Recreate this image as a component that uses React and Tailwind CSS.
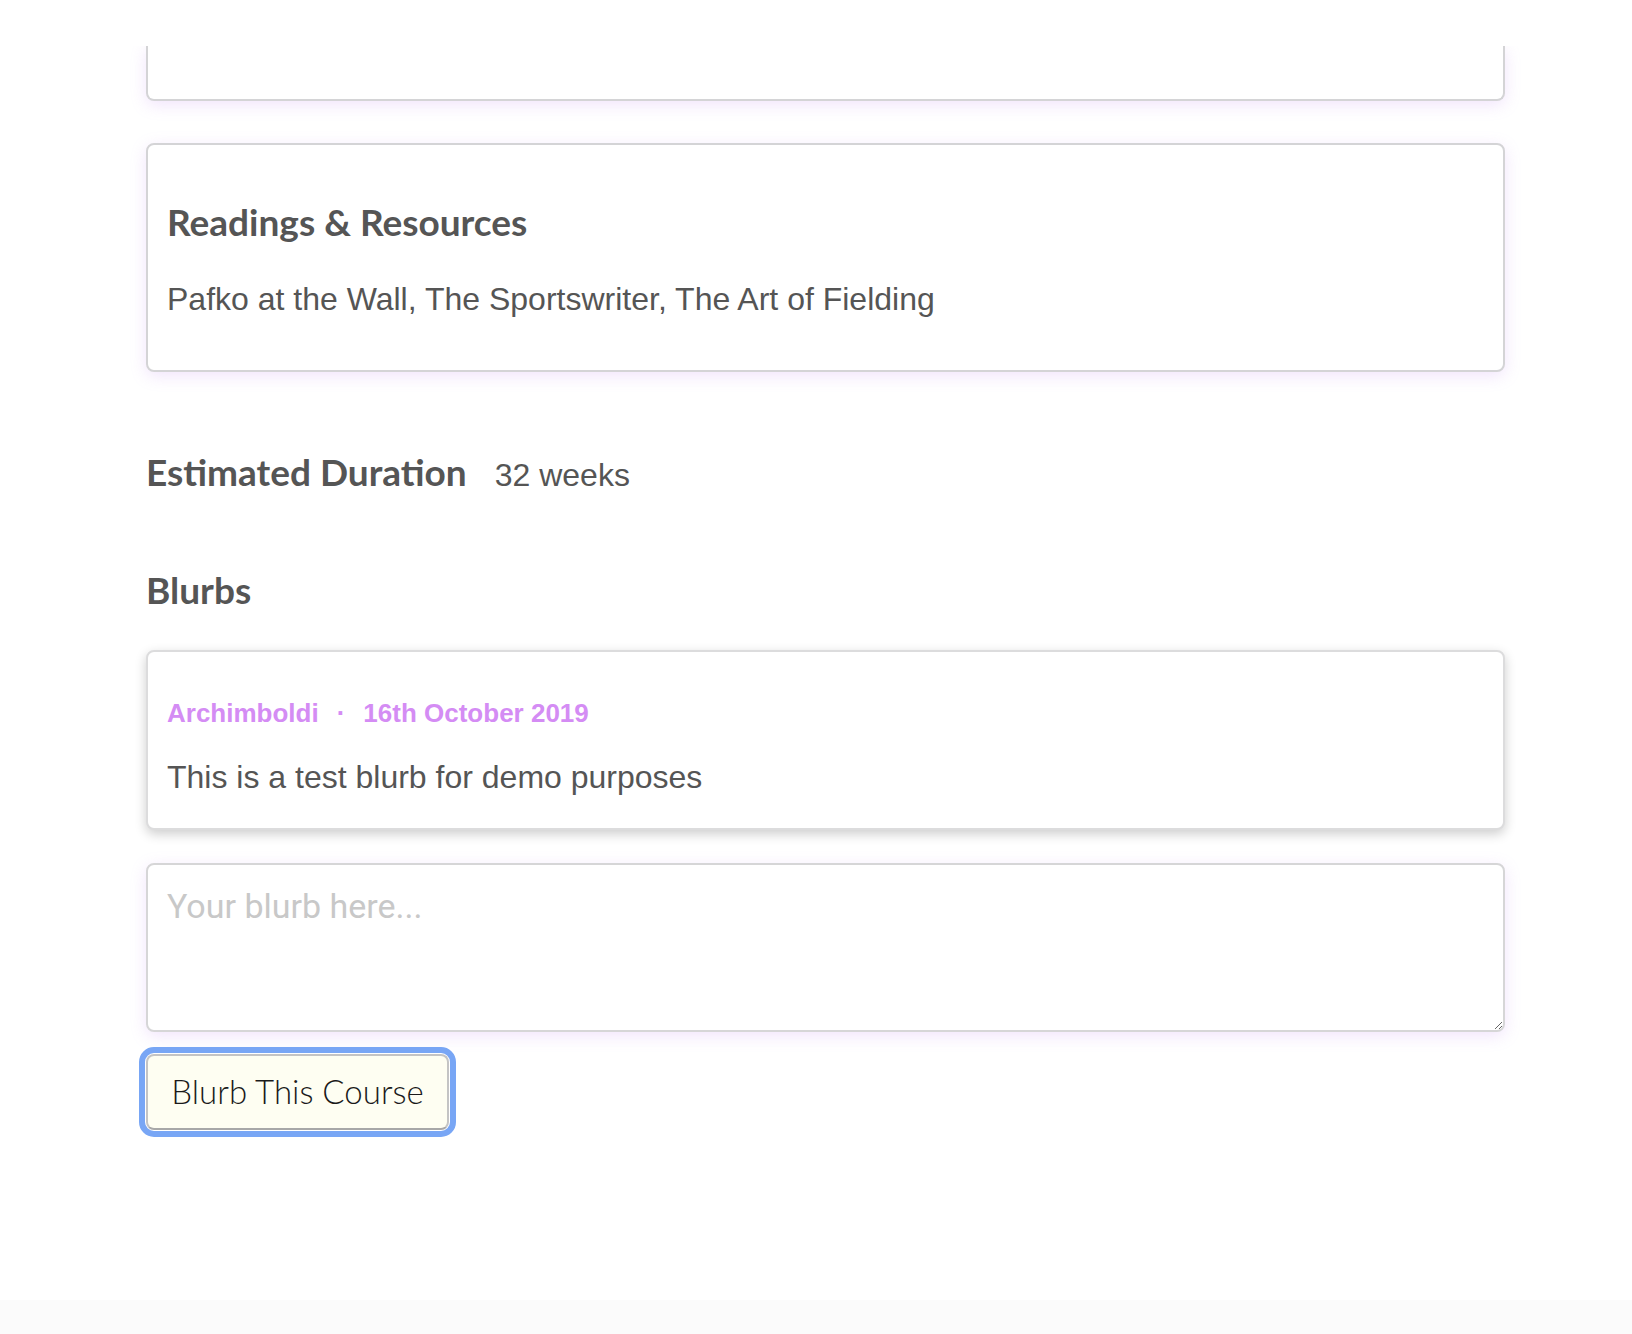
export default function App() {
  const heading = "font-['Lato',sans-serif] font-bold text-[37px] leading-[44px] text-[#555555]";
  const body = "font-['Liberation_Sans',Arial,sans-serif] text-[32px] leading-[44px] text-[#555555]";

  return (
    <div className="min-h-[1334px] bg-white flex flex-col">
      <div className="relative z-10 h-[46px] bg-white" />

      <main className="w-[1359px] ml-[146px] flex flex-col">
        {/* bottom of the previous segment, the rest is scrolled under the header */}
        <div className="h-[55px] bg-white border-2 border-t-0 border-[#d4d4d6] rounded-b-lg shadow-[0_4px_16px_rgba(190,130,240,0.22)]" />

        <section className="mt-[42px] bg-white border-2 border-[#d4d4d6] rounded-lg px-[19px] pt-[55px] pb-[49px] shadow-[0_4px_16px_rgba(190,130,240,0.22)]">
          <h3 className={heading}>Readings &amp; Resources</h3>
          <p className={`${body} mt-[33px]`}>Pafko at the Wall, The Sportswriter, The Art of Fielding</p>
        </section>

        <div className="mt-[78px] flex items-baseline gap-[28px]">
          <h3 className={heading}>Estimated Duration</h3>
          <span className={body}>32 weeks</span>
        </div>

        <h3 className={`${heading} mt-[71px]`}>Blurbs</h3>

        <article className="mt-[38px] bg-white border-2 border-[#dcdcdd] rounded-lg px-[19px] pt-[45px] pb-[29px] shadow-[0_4px_12px_rgba(0,0,0,0.2)]">
          <div className="flex items-center font-['Liberation_Sans',Arial,sans-serif] font-bold text-[26px] leading-[32px] text-[#d48cf4]">
            <span>Archimboldi</span>
            <span className="mx-[18px]">·</span>
            <span>16th October 2019</span>
          </div>
          <p className={`${body} mt-[26px]`}>This is a test blurb for demo purposes</p>
        </article>

        <textarea
          placeholder="Your blurb here..."
          className="mt-[33px] h-[169px] w-full bg-white border-2 border-[#d6d6d7] rounded-lg p-[19px] font-['Roboto',sans-serif] text-[34px] leading-[44px] text-[#555555] placeholder:text-[#c8c8c8] outline-none shadow-[0_4px_16px_rgba(190,130,240,0.22)]"
        />

        <div className="mt-[22px]">
          <button className="h-[76px] w-[303px] bg-[#fefef2] border-2 border-[#c4c4c4] border-b-[#a8a8a8] rounded-lg font-['Lato',sans-serif] font-light text-[33px] text-[#1a1a1a] outline-[6px] outline-solid outline-[#78a6f5] outline-offset-[1px]">
            Blurb This Course
          </button>
        </div>
      </main>

      <div className="mt-auto h-[34px] bg-[#fbfbfb]" />
    </div>
  );
}
